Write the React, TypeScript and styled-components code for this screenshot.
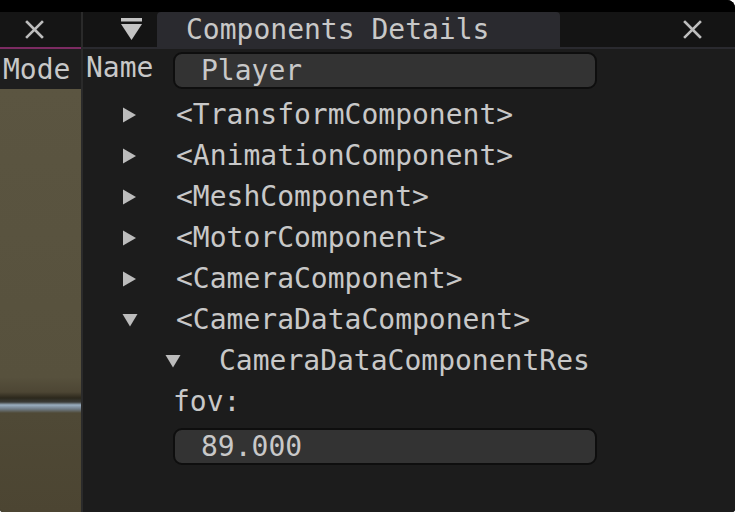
import React from 'react'
import styled, { createGlobalStyle } from 'styled-components'

const GlobalStyle = createGlobalStyle`
  html, body {
    margin: 0;
    padding: 0;
    background: #ffffff;
    overflow: hidden;
  }
  #root {
    width: 735px;
    height: 512px;
  }
`

const Frame = styled.div`
  width: 735px;
  height: 512px;
  display: flex;
  flex-direction: column;
  background: #000;
  border-radius: 0 8px 3px 3px;
  overflow: hidden;
  font-family: 'DejaVu Sans Mono', 'Liberation Mono', monospace;
  font-size: 28px;
  color: #c8c8c8;
`

const TopStrip = styled.div`
  height: 12px;
  background: #000;
  flex: none;
`

const Main = styled.div`
  flex: 1;
  display: flex;
  min-height: 0;
`

/* left docked window (viewport) */
const LeftPanel = styled.div`
  width: 81px;
  flex: none;
  display: flex;
  flex-direction: column;
  border-right: 2px solid #2a2a2a;
`

const TitleBar = styled.div`
  height: 35px;
  flex: none;
  display: flex;
  align-items: center;
  background: #151515;
`

const LeftTitle = styled(TitleBar)`
  justify-content: flex-start;
  padding-left: 25px;
`

const ActiveLine = styled.div`
  height: 2px;
  background: #7c2b62;
  flex: none;
`

const ModeRow = styled.div`
  height: 40px;
  flex: none;
  display: flex;
  align-items: center;
  padding-left: 3px;
  background: #1e1e1e;
  white-space: nowrap;
  overflow: hidden;
`

const Viewport = styled.div`
  flex: 1;
  background: linear-gradient(
    180deg,
    #5b5541 0px,
    #57513d 288px,
    #4d4634 303px,
    #2c281c 309px,
    #3a3a36 313px,
    #9aaec0 316px,
    #6f7b86 320px,
    #4f4936 324px,
    #4c4532 100%
  );
`

/* right window */
const RightWindow = styled.div`
  flex: 1;
  display: flex;
  flex-direction: column;
  background: #1c1c1c;
`

const RightTitle = styled(TitleBar)`
  background: #141414;
`

const MenuButton = styled.div`
  width: 74px;
  height: 100%;
  display: flex;
  align-items: center;
  padding-left: 38px;
  box-sizing: border-box;
`

const Tab = styled.div`
  width: 403px;
  height: 100%;
  display: flex;
  align-items: center;
  padding-left: 29px;
  box-sizing: border-box;
  background: #2a2a2f;
  border-radius: 4px 4px 0 0;
  white-space: nowrap;
`

const CloseButton = styled.div`
  margin-left: auto;
  width: 80px;
  display: flex;
  align-items: center;
  justify-content: flex-start;
  padding-left: 28px;
  box-sizing: border-box;
`

const TabLine = styled.div`
  height: 2px;
  background: #2a2a2f;
  flex: none;
`

const Content = styled.div`
  flex: 1;
  display: flex;
  flex-direction: column;
  padding-left: 3px;
`

const NameRow = styled.div`
  height: 45px;
  display: flex;
  align-items: flex-start;
  flex: none;
`

const Label = styled.div`
  width: 87px;
  line-height: 37px;
`

const Field = styled.div<{ $top: number }>`
  width: 424px;
  height: 37px;
  margin-top: ${(p) => p.$top}px;
  box-sizing: border-box;
  display: flex;
  align-items: center;
  padding-left: 26px;
  background: #333333;
  border: 2px solid #0e0e0e;
  border-radius: 9px;
`

const TreeRow = styled.div<{ $depth: number }>`
  height: 41px;
  flex: none;
  display: flex;
  align-items: center;
  padding-left: ${(p) => 36 + p.$depth * 43}px;
  white-space: nowrap;
`

const Arrow = styled.div`
  width: 54px;
  flex: none;
  display: flex;
  align-items: center;
`

const PlainRow = styled.div`
  height: 41px;
  flex: none;
  display: flex;
  align-items: center;
  padding-left: 87px;
`

const FieldRow = styled.div`
  padding-left: 87px;
  flex: none;
`

const CloseIcon = () => (
  <svg width="19" height="19" viewBox="0 0 19 19">
    <path d="M2 2 L17 17 M17 2 L2 17" stroke="#bdbdbd" strokeWidth="2.6" strokeLinecap="square" />
  </svg>
)

const MenuIcon = () => (
  <svg width="21" height="24" viewBox="0 0 21 24">
    <rect x="0" y="0" width="21" height="3.5" fill="#c4c4c4" />
    <path d="M0 6 L21 6 L10.5 22 Z" fill="#c4c4c4" />
  </svg>
)

const RightArrow = () => (
  <svg width="15" height="16" viewBox="0 0 15 16">
    <path d="M1 0.5 L14 8 L1 15.5 Z" fill="#bcbcbc" />
  </svg>
)

const DownArrow = () => (
  <svg width="16" height="14" viewBox="0 0 16 14">
    <path d="M0.5 1 L15.5 1 L8 13.5 Z" fill="#bcbcbc" />
  </svg>
)

const components = [
  { name: '<TransformComponent>', open: false },
  { name: '<AnimationComponent>', open: false },
  { name: '<MeshComponent>', open: false },
  { name: '<MotorComponent>', open: false },
  { name: '<CameraComponent>', open: false },
  { name: '<CameraDataComponent>', open: true },
]

export default function App() {
  return (
    <>
      <GlobalStyle />
      <Frame>
        <TopStrip />
        <Main>
          <LeftPanel>
            <LeftTitle>
              <CloseIcon />
            </LeftTitle>
            <ActiveLine />
            <ModeRow>Mode</ModeRow>
            <Viewport />
          </LeftPanel>

          <RightWindow>
            <RightTitle>
              <MenuButton>
                <MenuIcon />
              </MenuButton>
              <Tab>Components Details</Tab>
              <CloseButton>
                <CloseIcon />
              </CloseButton>
            </RightTitle>
            <TabLine />
            <Content>
              <NameRow>
                <Label>Name</Label>
                <Field $top={3}>Player</Field>
              </NameRow>
              {components.map((c) => (
                <TreeRow key={c.name} $depth={0}>
                  <Arrow>{c.open ? <DownArrow /> : <RightArrow />}</Arrow>
                  {c.name}
                </TreeRow>
              ))}
              <TreeRow $depth={1}>
                <Arrow>
                  <DownArrow />
                </Arrow>
                CameraDataComponentRes
              </TreeRow>
              <PlainRow>fov:</PlainRow>
              <FieldRow>
                <Field $top={6}>89.000</Field>
              </FieldRow>
            </Content>
          </RightWindow>
        </Main>
      </Frame>
    </>
  )
}
